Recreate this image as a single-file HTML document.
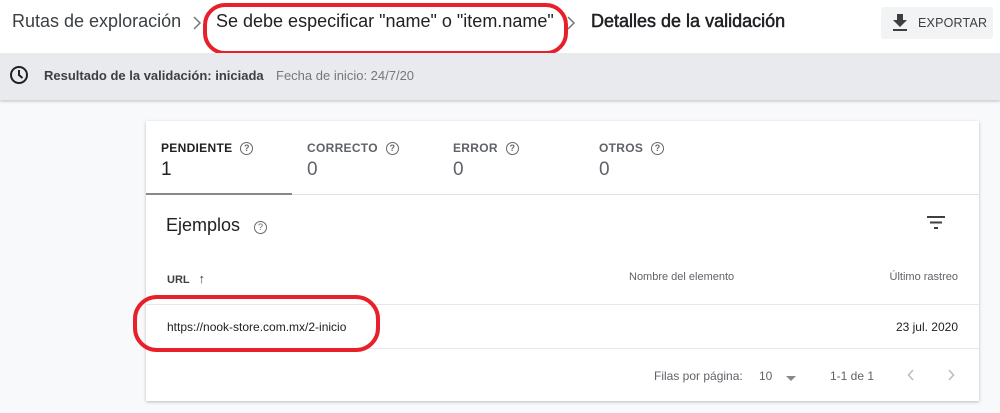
<!DOCTYPE html>
<html><head><meta charset="utf-8"><style>
*{margin:0;padding:0;box-sizing:border-box}
body{width:1000px;height:413px;overflow:hidden;background:#f8f9fa;font-family:"Liberation Sans",sans-serif;color:#202124;position:relative}
.a{position:absolute;white-space:nowrap}
.top{position:absolute;left:0;top:0;width:1000px;height:53px;background:#fff}
.bar{position:absolute;left:0;top:53px;width:1000px;height:47px;background:#e8eaed;box-shadow:0 2px 2px rgba(0,0,0,.15)}
.card{position:absolute;left:146px;top:121px;width:833px;height:280px;background:#fff;box-shadow:0 1px 3px rgba(0,0,0,.25)}
.red{position:absolute;border:4px solid #e8202a;border-radius:22px}
.q{display:inline-block;width:13px;height:13px;border:1.3px solid #666;border-radius:50%;font-size:9px;line-height:11px;text-align:center;color:#666;vertical-align:1px;margin-left:8px}
.tl{font-size:12px;font-weight:bold;color:#5f6368;letter-spacing:.3px}
.tn{font-size:19px;color:#5f6368}
.g{color:#5f6368}
</style></head><body>
<div class="top"></div>
<div class="a" style="left:12px;top:11px;font-size:18px;color:#3c4043">Rutas de exploración</div>
<svg class="a" style="left:192px;top:15px" width="10" height="16" viewBox="0 0 10 16"><path d="M2 2l6 6-6 6" fill="none" stroke="#777" stroke-width="1.5"/></svg>
<div class="a" style="left:216px;top:11px;font-size:18px">Se debe especificar "name" o "item.name"</div>
<svg class="a" style="left:566px;top:15px" width="10" height="16" viewBox="0 0 10 16"><path d="M2 2l6 6-6 6" fill="none" stroke="#777" stroke-width="1.5"/></svg>
<div class="a" style="left:591px;top:11px;font-size:18px;color:#202124;-webkit-text-stroke:0.5px #202124">Detalles de la validación</div>
<div class="a" style="left:881px;top:7px;width:112px;height:32px;background:#f1f3f4;border-radius:3px"></div>
<svg class="a" style="left:892px;top:14px" width="16" height="18" viewBox="0 0 16 18"><path d="M5 0h6v6h4l-7 7-7-7h4z M1 15h14v2H1z" fill="#3c4043"/></svg>
<div class="a" style="left:918px;top:16px;font-size:12.5px;color:#3c4043;letter-spacing:.2px">EXPORTAR</div>
<div class="red" style="left:203px;top:3px;width:365px;height:52px"></div>
<div class="bar"></div>
<svg class="a" style="left:9px;top:65px" width="20" height="20" viewBox="0 0 20 20"><circle cx="10" cy="10" r="8" fill="none" stroke="#202124" stroke-width="2"/><path d="M10 5v5l3.5 3" fill="none" stroke="#202124" stroke-width="2"/></svg>
<div class="a" style="left:44px;top:68px;font-size:13px;font-weight:bold;color:#3c4043">Resultado de la validación: iniciada</div>
<div class="a" style="left:276px;top:68px;font-size:13px;color:#777">Fecha de inicio: 24/7/20</div>
<div class="card">
<div class="a tl" style="left:15px;top:20px;color:#202124">PENDIENTE<span class="q">?</span></div>
<div class="a tn" style="left:15px;top:38px;color:#202124">1</div>
<div class="a tl" style="left:161px;top:20px">CORRECTO<span class="q">?</span></div>
<div class="a tn" style="left:161px;top:38px">0</div>
<div class="a tl" style="left:307px;top:20px">ERROR<span class="q">?</span></div>
<div class="a tn" style="left:307px;top:38px">0</div>
<div class="a tl" style="left:453px;top:20px">OTROS<span class="q">?</span></div>
<div class="a tn" style="left:453px;top:38px">0</div>
<div class="a" style="left:0;top:73px;width:833px;height:1px;background:#e0e0e0"></div>
<div class="a" style="left:0;top:72px;width:146px;height:2px;background:#888"></div>
<div class="a" style="left:20px;top:94px;font-size:18px;color:#202124">Ejemplos<span class="q" style="margin-left:14px">?</span></div>
<svg class="a" style="left:781px;top:95px" width="18" height="14" viewBox="0 0 18 14"><path d="M0 1h18M3 6.5h12M7 12h4" stroke="#3c4043" stroke-width="2"/></svg>
<div class="a" style="left:21px;top:150px;font-size:11px;font-weight:bold;color:#3c4043">URL <span style="margin-left:6px;font-size:13px">↑</span></div>
<div class="a g" style="left:483px;top:150px;font-size:11px">Nombre del elemento</div>
<div class="a g" style="right:21px;top:150px;font-size:11px">Último rastreo</div>
<div class="a" style="left:0;top:183px;width:833px;height:1px;background:#e8e8e8"></div>
<div class="a" style="left:21px;top:199px;font-size:12px;color:#202124">https://nook-store.com.mx/2-inicio</div>
<div class="a" style="right:21px;top:199px;font-size:12px;color:#202124">23 jul. 2020</div>
<div class="a" style="left:0;top:227px;width:833px;height:1px;background:#e8e8e8"></div>
<div class="a g" style="left:508px;top:248px;font-size:12px">Filas por página:</div>
<div class="a g" style="left:613px;top:248px;font-size:12px">10</div>
<div class="a" style="left:640px;top:255px;width:0;height:0;border-left:5px solid transparent;border-right:5px solid transparent;border-top:5px solid #888"></div>
<div class="a g" style="left:684px;top:248px;font-size:12px">1-1 de 1</div>
<svg class="a" style="left:761px;top:248px" width="8" height="12" viewBox="0 0 8 12"><path d="M6 1L1.5 6 6 11" fill="none" stroke="#bbb" stroke-width="1.5"/></svg>
<svg class="a" style="left:801px;top:248px" width="8" height="12" viewBox="0 0 8 12"><path d="M2 1l4.5 5L2 11" fill="none" stroke="#bbb" stroke-width="1.5"/></svg>
</div>
<div class="red" style="left:133px;top:295px;width:247px;height:57px;border-radius:24px"></div>
</body></html>
